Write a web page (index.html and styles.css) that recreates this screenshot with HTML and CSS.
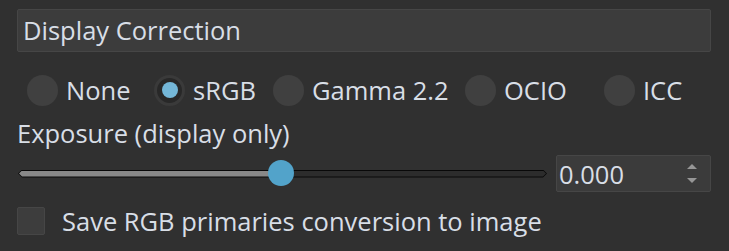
FILE: index.html
```html
<html>
<head>
<link rel="stylesheet" href="styles.css">
</head>
<body>

<div class="panel">

  <div class="groupTitle">Display Correction</div>

  <div class="radioRow">
    <label class="radioItem"><span class="radio"></span>None</label>
    <label class="radioItem"><span class="radio checked"></span>sRGB</label>
    <label class="radioItem"><span class="radio"></span>Gamma 2.2</label>
    <label class="radioItem"><span class="radio"></span>OCIO</label>
    <label class="radioItem"><span class="radio"></span>ICC</label>
  </div>

  <div class="fieldLabel">Exposure (display only)</div>

  <div class="sliderRow">
    <div class="slider">
      <div class="trackFill"></div>
      <div class="trackRest"></div>
      <div class="knob"></div>
    </div>
    <div class="spinBox">
      <span class="spinValue">0.000</span>
      <span class="spinArrows">
        <span class="arrowUp"></span>
        <span class="arrowDown"></span>
      </span>
    </div>
  </div>

  <label class="checkRow"><span class="checkBox"></span>Save RGB primaries conversion to image</label>

</div>

</body>
</html>
```

FILE: styles.css
```css
body {
  margin: 0px;
  background-color: rgb(48, 48, 48);
  color: rgb(216, 222, 230);
  font-family: "Open Sans", "Noto Sans", sans-serif;
  font-size: 25.5px;
}

.panel {
  display: flex;
  flex-direction: column;
  padding: 9px 18px 0px 17px;
}

.groupTitle {
  height: 41px;
  line-height: 41px;
  padding-left: 5px;
  background-color: rgb(60, 60, 60);
  border: 1px solid rgb(70, 70, 70);
  border-radius: 2px;
}

.radioRow {
  display: grid;
  grid-template-columns: 127px 119px 192px 139px 1fr;
  margin-top: 21px;
  padding-left: 10px;
  height: 32px;
}

.radioItem {
  display: flex;
  align-items: center;
  gap: 8px;
}

.radio {
  width: 31px;
  height: 31px;
  border-radius: 50%;
  background-color: rgb(64, 64, 64);
  box-sizing: border-box;
  display: flex;
  align-items: center;
  justify-content: center;
}

.radio.checked {
  background-color: rgb(40, 40, 40);
  border: 3px solid rgb(58, 58, 58);
}

.radio.checked::after {
  content: "";
  width: 16px;
  height: 16px;
  border-radius: 50%;
  background-color: rgb(116, 183, 216);
}

.fieldLabel {
  margin-top: 12px;
  height: 32px;
  line-height: 32px;
}

.sliderRow {
  display: flex;
  align-items: center;
  gap: 9px;
  margin-top: 6px;
}

.slider {
  position: relative;
  flex-grow: 1;
  display: flex;
  align-items: center;
  height: 37px;
  margin-left: 1px;
}

/* track ends come to a point, like the Qt groove */
.trackFill {
  width: 263px;
  height: 8px;
  background-color: rgb(8, 8, 8);
  clip-path: polygon(0px 50%, 4px 0px, 100% 0px, 100% 100%, 4px 100%);
  display: flex;
  align-items: center;
}

.trackFill::after {
  content: "";
  flex-grow: 1;
  height: 6px;
  margin-left: 1px;
  background-color: rgb(136, 136, 136);
  clip-path: polygon(0px 50%, 3px 0px, 100% 0px, 100% 100%, 3px 100%);
}

.trackRest {
  flex-grow: 1;
  height: 8px;
  background-color: rgb(8, 8, 8);
  clip-path: polygon(0px 0px, calc(100% - 4px) 0px, 100% 50%, calc(100% - 4px) 100%, 0px 100%);
  display: flex;
  align-items: center;
}

.trackRest::after {
  content: "";
  flex-grow: 1;
  height: 6px;
  margin-right: 1px;
  background-color: rgb(44, 44, 44);
  clip-path: polygon(0px 0px, calc(100% - 3px) 0px, 100% 50%, calc(100% - 3px) 100%, 0px 100%);
}

.knob {
  position: absolute;
  left: 250px;
  top: 5px;
  width: 26px;
  height: 26px;
  border-radius: 50%;
  background-color: rgb(82, 163, 202);
}

.spinBox {
  width: 155px;
  height: 37px;
  display: flex;
  align-items: center;
  justify-content: space-between;
  background-color: rgb(59, 59, 59);
  border: 1px solid rgb(70, 70, 70);
  border-radius: 2px;
  padding-left: 2px;
  padding-right: 13px;
  box-sizing: border-box;
}

.spinArrows {
  display: flex;
  flex-direction: column;
  gap: 9px;
}

.arrowUp {
  width: 0px;
  height: 0px;
  border-left: 5px solid transparent;
  border-right: 5px solid transparent;
  border-bottom: 5px solid rgb(150, 150, 150);
}

.arrowDown {
  width: 0px;
  height: 0px;
  border-left: 5px solid transparent;
  border-right: 5px solid transparent;
  border-top: 5px solid rgb(150, 150, 150);
}

.checkRow {
  display: flex;
  align-items: center;
  gap: 17px;
  margin-top: 12px;
}

.checkBox {
  width: 28px;
  height: 28px;
  box-sizing: border-box;
  background-color: rgb(61, 61, 61);
  border: 1px solid rgb(70, 70, 70);
  border-radius: 2px;
}
```
